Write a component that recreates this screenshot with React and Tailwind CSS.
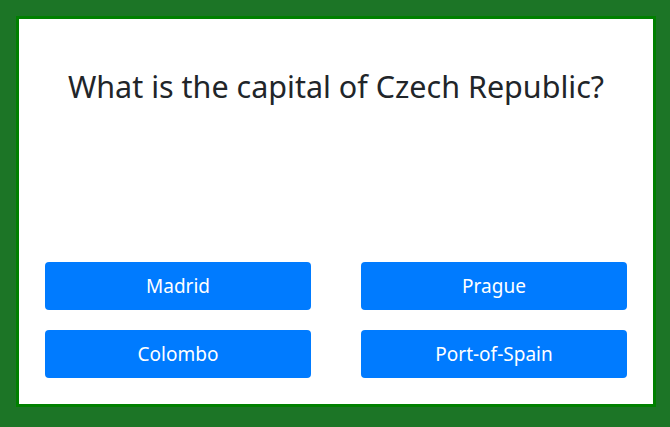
import React from "react";

const answers = ["Madrid", "Prague", "Colombo", "Port-of-Spain"];

export default function App() {
  return (
    <div className="w-[670px] h-[427px] bg-[#1c7526] pt-[16px] pl-[16px]" style={{ fontFamily: '"Noto Sans", "Open Sans", sans-serif' }}>
      <div className="w-[640px] h-[391px] border-[3px] border-[#008000] bg-white flex flex-col justify-between px-[26px] pb-[26px] pt-[48px]">
        <h2 className="text-center text-[30.5px] leading-[38px] text-[#212529]">
          What is the capital of Czech Republic?
        </h2>
        <div className="grid grid-cols-2 gap-x-[50px] gap-y-[20px]">
          {answers.map((a) => (
            <button
              key={a}
              className="h-[48px] rounded-[4px] bg-[#007bff] text-white text-[19px]"
            >
              {a}
            </button>
          ))}
        </div>
      </div>
    </div>
  );
}
